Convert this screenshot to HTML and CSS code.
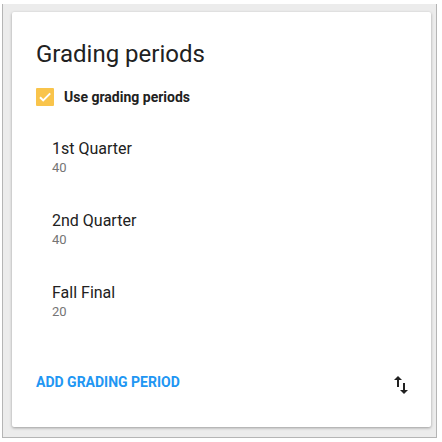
FILE: index.html
```html
<!DOCTYPE html>
<html>
<head>
<meta charset="utf-8">
<link rel="stylesheet" href="styles.css">
</head>
<body>
<div class="frame">
  <div class="card">
    <h1 class="title">Grading periods</h1>
    <label class="check">
      <span class="box">
        <svg width="18" height="18" viewBox="0 0 18 18"><path d="M4 9.2l3.2 3.2L14.2 5.4" fill="none" stroke="#fff" stroke-width="2"/></svg>
      </span>
      <span class="check-label">Use grading periods</span>
    </label>
    <ul class="periods">
      <li class="period"><div class="name">1st Quarter</div><div class="weight">40</div></li>
      <li class="period"><div class="name">2nd Quarter</div><div class="weight">40</div></li>
      <li class="period"><div class="name">Fall Final</div><div class="weight">20</div></li>
    </ul>
    <div class="actions">
      <span class="add">ADD GRADING PERIOD</span>
      <svg class="sort" width="24" height="24" viewBox="0 0 24 24"><path d="M16 17.01V10h-2v7.01h-3L15 21l4-3.99h-3zM9 3L5 6.99h3V14h2V6.99h3L9 3z" fill="#212121"/></svg>
    </div>
  </div>
</div>
</body>
</html>
```
FILE: styles.css
```css
html, body { margin: 0; padding: 0; background: #fff; }
body { font-family: Roboto, "Noto Sans", sans-serif; color: #212121; }
.frame {
  margin: 4px 5px 0 2px;
  height: 434px;
  box-sizing: border-box;
  background: #ececec;
  border: 1px solid #b5b5b5;
  border-top: none;
  padding: 8px 5px 10px 9px;
}
.card {
  height: 415px;
  box-sizing: border-box;
  background: #fff;
  border-radius: 2px;
  box-shadow: 0 1px 3px rgba(0,0,0,0.35);
  padding: 26px 24px 0 24px;
  display: flex;
  flex-direction: column;
}
.title { margin: 0; font-size: 24px; font-weight: 400; line-height: 32px; color: #212121; }
.check { display: flex; align-items: center; margin-top: 18px; }
.box { width: 18px; height: 18px; background: #f9c44b; border-radius: 1px; display: flex; }
.check-label { margin-left: 10px; font-size: 14px; font-weight: 700; color: #212121; }
.periods { list-style: none; margin: 21px 0 0 16px; padding: 0; }
.period { height: 72px; display: flex; flex-direction: column; padding-top: 12px; box-sizing: border-box; }
.name { font-size: 16px; line-height: 20px; color: #212121; }
.weight { font-size: 13px; line-height: 18px; color: #757575; }
.actions { display: flex; align-items: center; justify-content: space-between; margin-top: 24px; }
.add { color: #2196f3; font-size: 14px; font-weight: 700; }
.sort { margin-top: 6px; margin-right: -6px; }
```
